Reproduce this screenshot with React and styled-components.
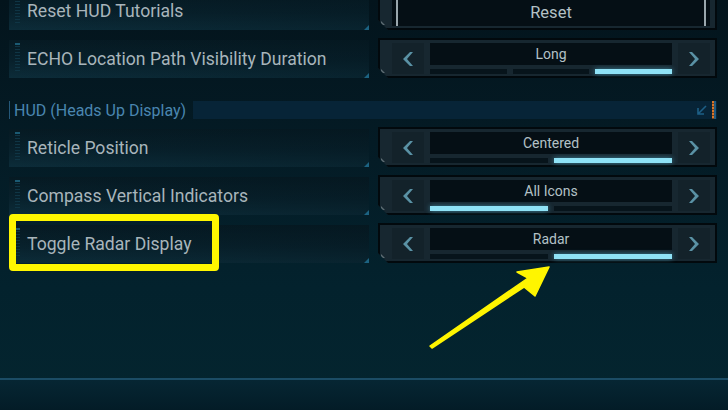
import React from 'react';
import styled, { createGlobalStyle } from 'styled-components';

const GlobalStyle = createGlobalStyle`
  html, body {
    margin: 0;
    padding: 0;
    width: 728px;
    height: 410px;
    overflow: hidden;
    background: #03161e;
  }
  * { box-sizing: border-box; }
`;

const Screen = styled.div`
  position: relative;
  width: 728px;
  height: 410px;
  display: flex;
  flex-direction: column;
  font-family: Roboto, "Liberation Sans", sans-serif;
  background: linear-gradient(180deg, #03141c 0%, #041b25 35%, #03222d 70%, #04252f 100%);
  overflow: hidden;
`;

const Options = styled.div`
  flex: 1;
  display: flex;
  flex-direction: column;
  padding: 0 11px 0 9px;
  margin-top: -10px;
`;

const Row = styled.div`
  display: grid;
  grid-template-columns: 360px 339px;
  column-gap: 9px;
  height: 40px;
  margin-bottom: 8px;
`;

const Label = styled.div`
  position: relative;
  align-self: end;
  height: 38px;
  display: flex;
  align-items: center;
  padding-left: 18px;
  font-size: 17.6px;
  font-weight: 400;
  color: #a8b5bb;
  background:
    linear-gradient(90deg, rgba(3, 20, 28, 0) 0%, rgba(3, 20, 28, 0.35) 100%),
    linear-gradient(180deg, #061a23 0%, #08212c 55%, #0c2c39 100%);

  &::before {
    content: '';
    position: absolute;
    left: 6px;
    top: 3px;
    bottom: 5px;
    width: 5px;
    background:
      linear-gradient(180deg, #1b5a73 0 2px, transparent 2px),
      repeating-linear-gradient(180deg, #0f3545 0 1px, transparent 1px 3px);
  }

  &::after {
    content: '';
    position: absolute;
    right: 0;
    bottom: 0;
    width: 0;
    height: 0;
    border-left: 5px solid transparent;
    border-bottom: 5px solid #1c6382;
  }
`;

const Selector = styled.div`
  position: relative;
  display: grid;
  grid-template-columns: 32px 1fr 32px;
  column-gap: 6px;
  height: 40px;
  padding: 3px 5px 2px 12px;
  background: #172730;
  border: 2px solid #02090d;
  clip-path: polygon(0 0, 100% 0, 100% 100%, 10px 100%, 0 calc(100% - 10px));

  &::after {
    content: '';
    position: absolute;
    left: 1px;
    bottom: 3px;
    width: 0;
    height: 0;
    border-left: 4px solid #5d6c73;
    border-top: 4px solid transparent;
  }
`;

const ArrowBox = styled.div`
  display: flex;
  align-items: center;
  justify-content: center;
  background: #13222a;
  color: #5a92a5;
`;

const Center = styled.div`
  display: flex;
  flex-direction: column;
  gap: 4px;
`;

const Value = styled.div`
  height: 22px;
  display: flex;
  align-items: center;
  justify-content: center;
  background: #050f15;
  color: #b3c1c6;
  font-size: 14px;
  padding-bottom: 1px;
`;

const Bars = styled.div`
  display: flex;
  gap: 6px;
  height: 5px;
`;

const Bar = styled.div`
  flex: 1;
  background: ${p => (p.$on ? '#8fe2f6' : '#07141b')};
  box-shadow: ${p => (p.$on ? '0 0 5px rgba(90, 200, 235, 0.55)' : 'none')};
`;

const ButtonSelector = styled(Selector)`
  display: flex;
  padding: 3px 5px 2px 12px;
`;

const ResetButton = styled.div`
  flex: 1;
  display: flex;
  align-items: center;
  justify-content: center;
  padding-top: 4px;
  background: #050f15;
  color: #b3c1c6;
  font-size: 16.5px;
  box-shadow: inset 4px 0 0 #050f15, inset 6px 0 0 #9aa7ad, inset -4px 0 0 #050f15, inset -6px 0 0 #9aa7ad;
`;

const Section = styled.div`
  display: flex;
  height: 18px;
  margin: 15px 0 8px;
  align-items: stretch;
`;

const SectionTitle = styled.div`
  display: flex;
  align-items: center;
  padding: 0 7px 0 4px;
  border-left: 1px solid #24587a;
  color: #4a86b0;
  font-size: 16px;
`;

const SectionBand = styled.div`
  flex: 1;
  display: flex;
  align-items: center;
  justify-content: flex-end;
  gap: 4px;
  padding-right: 1px;
  background: #072437;
`;

const DashLine = styled.div`
  width: 2px;
  align-self: stretch;
  background: repeating-linear-gradient(180deg, #d8762b 0 2px, #7a3d14 2px 3px);
  box-shadow: 2px 0 0 #1e5a80;
  margin-right: 2px;
`;

const Footer = styled.div`
  height: 32px;
  border-top: 2px solid #1b4c65;
  background: linear-gradient(180deg, #062633 0%, #031c27 100%);
`;

const Highlight = styled.div`
  position: absolute;
  left: 0;
  top: -11px;
  width: 210px;
  height: 57px;
  border: 7px solid #fff700;
  border-radius: 4px;
  pointer-events: none;
`;

const Overlay = styled.svg`
  position: absolute;
  left: 0;
  top: 0;
  pointer-events: none;
`;

const Chevron = ({ dir }) => (
  <svg width="12" height="18" viewBox="0 0 12 18">
    {dir === 'left' ? (
      <path d="M8 2 L11 2 L5 9 L11 16 L8 16 L1 9 Z" fill="currentColor" />
    ) : (
      <path d="M4 2 L1 2 L7 9 L1 16 L4 16 L11 9 Z" fill="currentColor" />
    )}
  </svg>
);

const Stepper = ({ value, count, active }) => (
  <Selector>
    <ArrowBox><Chevron dir="left" /></ArrowBox>
    <Center>
      <Value>{value}</Value>
      <Bars>
        {Array.from({ length: count }, (_, i) => (
          <Bar key={i} $on={i === active} />
        ))}
      </Bars>
    </Center>
    <ArrowBox><Chevron dir="right" /></ArrowBox>
  </Selector>
);

const CornerIcon = () => (
  <svg width="12" height="12" viewBox="0 0 12 12">
    <path d="M10 2 L2 10 M2 4 L2 10 L8 10" stroke="#1d5f86" strokeWidth="1.6" fill="none" />
  </svg>
);

export default function App() {
  return (
    <>
      <GlobalStyle />
      <Screen>
        <Options>
          <Row>
            <Label>Reset HUD Tutorials</Label>
            <ButtonSelector>
              <ResetButton>Reset</ResetButton>
            </ButtonSelector>
          </Row>
          <Row>
            <Label>ECHO Location Path Visibility Duration</Label>
            <Stepper value="Long" count={3} active={2} />
          </Row>

          <Section>
            <SectionTitle>HUD (Heads Up Display)</SectionTitle>
            <SectionBand>
              <CornerIcon />
              <DashLine />
            </SectionBand>
          </Section>

          <Row>
            <Label>Reticle Position</Label>
            <Stepper value="Centered" count={2} active={1} />
          </Row>
          <Row>
            <Label>Compass Vertical Indicators</Label>
            <Stepper value="All Icons" count={2} active={0} />
          </Row>
          <Row>
            <Label>
              Toggle Radar Display
              <Highlight />
            </Label>
            <Stepper value="Radar" count={2} active={1} />
          </Row>
        </Options>
        <Footer />

        <Overlay width="728" height="410" viewBox="0 0 728 410">
          <polygon
            points="432,348 524,287 535,296 549,267 517,272 528,278 430,346"
            fill="#fff500"
            stroke="#fff500"
            strokeWidth="1.5"
            strokeLinejoin="round"
          />
        </Overlay>
      </Screen>
    </>
  );
}
